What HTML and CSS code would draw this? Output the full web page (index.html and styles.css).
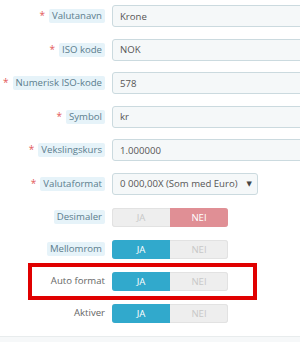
FILE: index.html
```html
<!DOCTYPE html>
<html lang="no">
<head>
<meta charset="utf-8">
<link rel="stylesheet" href="styles.css">
</head>
<body>
<div class="page">
  <form class="form">
    <div class="row text-row">
      <div class="label"><span class="req">*</span><span class="tip">Valutanavn</span></div>
      <div class="input">Krone</div>
    </div>
    <div class="row text-row">
      <div class="label"><span class="req">*</span><span class="tip">ISO kode</span></div>
      <div class="input">NOK</div>
    </div>
    <div class="row text-row">
      <div class="label"><span class="req">*</span><span class="tip">Numerisk ISO-kode</span></div>
      <div class="input">578</div>
    </div>
    <div class="row text-row">
      <div class="label"><span class="req">*</span><span class="tip">Symbol</span></div>
      <div class="input">kr</div>
    </div>
    <div class="row text-row">
      <div class="label"><span class="req">*</span><span class="tip">Vekslingskurs</span></div>
      <div class="input">1.000000</div>
    </div>
    <div class="row text-row select-row">
      <div class="label"><span class="req">*</span><span class="tip">Valutaformat</span></div>
      <div class="select"><span>0 000,00X (Som med Euro)</span><span class="caret">▼</span></div>
    </div>
    <div class="row toggle-row">
      <div class="label"><span class="tip">Desimaler</span></div>
      <div class="toggle"><span class="opt">JA</span><span class="opt on-no">NEI</span></div>
    </div>
    <div class="row toggle-row">
      <div class="label"><span class="tip">Mellomrom</span></div>
      <div class="toggle"><span class="opt on-yes">JA</span><span class="opt">NEI</span></div>
    </div>
    <div class="row toggle-row highlight">
      <div class="label"><span class="plain">Auto format</span></div>
      <div class="toggle"><span class="opt on-yes">JA</span><span class="opt">NEI</span></div>
      <div class="mark"></div>
    </div>
    <div class="row toggle-row">
      <div class="label"><span class="plain">Aktiver</span></div>
      <div class="toggle"><span class="opt on-yes">JA</span><span class="opt">NEI</span></div>
    </div>
  </form>
  <div class="footer"></div>
</div>
</body>
</html>
```
FILE: styles.css
```css
html, body {
  margin: 0;
  padding: 0;
  background: #fff;
  overflow: hidden;
}
body {
  width: 300px;
  height: 342px;
  font-family: "Open Sans", "DejaVu Sans", sans-serif;
  font-size: 9.6px;
  color: #555;
}
.page {
  width: 300px;
  height: 342px;
  display: flex;
  flex-direction: column;
  overflow: hidden;
}
.form {
  width: 340px;
  padding-top: 5px;
  flex: 1;
  display: flex;
  flex-direction: column;
}
.row {
  display: grid;
  grid-template-columns: 105px 1fr;
  column-gap: 7px;
  align-items: center;
}
.text-row {
  height: 22px;
  margin-bottom: 11.6px;
}
.select-row {
  margin-bottom: 13px;
}
.toggle-row {
  height: 19px;
  margin-bottom: 13px;
}
.highlight {
  position: relative;
}
.mark {
  position: absolute;
  left: 28px;
  top: -9px;
  width: 221px;
  height: 29px;
  border: 4px solid #e00000;
}
.label {
  display: flex;
  justify-content: flex-end;
  align-items: center;
  white-space: nowrap;
  line-height: 14px;
}
.req {
  color: #e35a5a;
  font-size: 10px;
  margin-right: 4px;
  position: relative;
  top: -1px;
}
.tip {
  background: #e6f3f9;
  color: #5b7d8d;
  padding: 0 3px;
  border-radius: 2px;
}
.plain {
  color: #666;
}
.input, .select {
  height: 22px;
  box-sizing: border-box;
  background: #f5f8f9;
  border: 1px solid #cbdadf;
  border-radius: 3px;
  padding: 0 7px;
  display: flex;
  align-items: center;
  color: #555;
  white-space: nowrap;
}
.select {
  width: 146px;
  justify-content: space-between;
  padding-right: 5px;
}
.caret {
  font-size: 7px;
  color: #444;
}
.toggle {
  width: 116px;
  height: 19px;
  display: grid;
  grid-template-columns: 1fr 1fr;
  border-radius: 3px;
  overflow: hidden;
  background: #eeeeee;
  box-shadow: inset 0 0 0 1px #e2e2e2;
}
.opt {
  display: flex;
  align-items: center;
  justify-content: center;
  color: #c8c8c8;
  font-size: 9.6px;
}
.on-yes {
  background: #31a9cc;
  color: #fff;
}
.on-no {
  background: #e08f95;
  color: #fff;
}
.footer {
  height: 8px;
  background: #f6f8f9;
  border-top: 1px solid #e8eced;
}
```
